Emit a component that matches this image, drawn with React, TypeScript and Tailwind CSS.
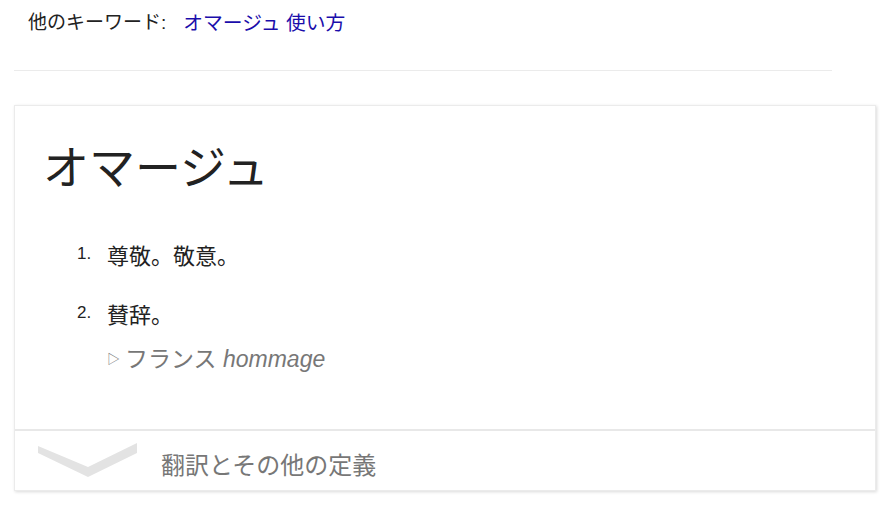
import React from 'react';

const jp = { fontFamily: '"Liberation Sans", "Noto Sans CJK JP", sans-serif' };

export default function App() {
  return (
    <div className="min-h-screen bg-white text-[#222]" style={jp}>
      <div className="w-[891px] pt-[10px]">
        {/* related keywords */}
        <div className="pl-[28px] flex items-center h-[26px] text-[19px] leading-[26px]">
          <span className="text-[#222]">他のキーワード:</span>
          <a className="ml-[17px] text-[19.8px] text-[#1a0dab]" href="#">オマージュ 使い方</a>
        </div>
        <div className="ml-[14px] w-[818px] h-px bg-[#ebebeb] mt-[34px]"></div>

        {/* definition card */}
        <div className="ml-[14px] mt-[34px] w-[862px] bg-white border border-[#ebebeb] shadow-[1px_1px_3px_rgba(0,0,0,0.15)]">
          <div className="pl-[28px] pt-[32px] pb-[54px]">
            <h1 className="text-[46px] leading-[60px] text-[#222]">オマージュ</h1>
            <ol className="mt-[43px] pl-[64px]">
              <li className="flex items-start h-[40px]">
                <span className="w-[30px] -ml-[30px] text-[17px] leading-[22px] mt-[2px]">1.</span>
                <span className="text-[22px] leading-[32px]">尊敬。敬意。</span>
              </li>
              <li className="flex items-start mt-[19px] h-[40px]">
                <span className="w-[30px] -ml-[30px] text-[17px] leading-[22px] mt-[2px]">2.</span>
                <span className="text-[22px] leading-[32px]">賛辞。</span>
              </li>
              <li className="flex items-center text-[#777] h-[32px] mt-[3px]">
                <span className="text-[13px] mr-[5px]">▷</span>
                <span className="text-[23px]">フランス <i className="italic">hommage</i></span>
              </li>
            </ol>
          </div>
          <div className="h-[2px] bg-[#e8e8e8]"></div>
          <div className="flex items-start h-[59px]">
            <svg width="100" height="35" viewBox="0 0 100 35" className="ml-[23px] mt-[12px]">
              <polygon points="0,3 50,24 99,0 99,10 50,34 0,10" fill="#e3e3e3" />
            </svg>
            <span className="ml-[23px] mt-[19px] text-[24px] leading-[32px] text-[#777]">翻訳とその他の定義</span>
          </div>
        </div>
      </div>
    </div>
  );
}
